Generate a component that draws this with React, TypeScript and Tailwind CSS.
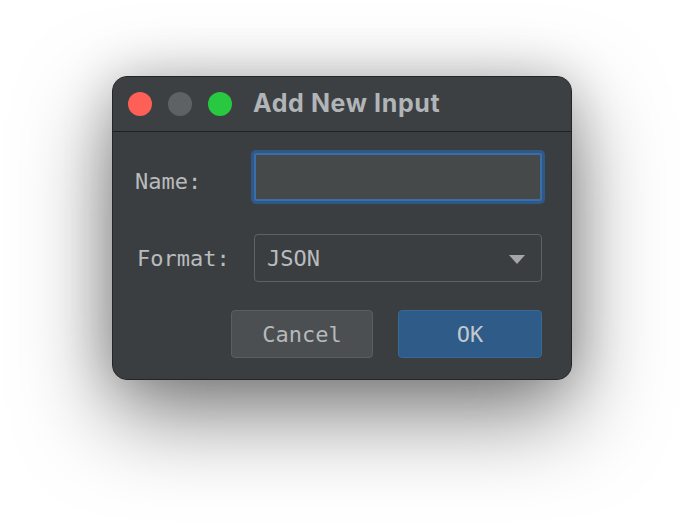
import React from "react";

export default function App() {
  return (
    <div className="w-[684px] h-[528px] bg-white overflow-hidden pl-[112px] pt-[76px]">
      <div className="w-[460px] h-[304px] rounded-[15px] bg-[#3c3f41] border border-[#242526] shadow-[0_34px_90px_rgba(0,0,0,0.5),0_0_50px_rgba(0,0,0,0.18)] flex flex-col overflow-hidden">
        <div className="h-[55px] flex items-center pl-[15px] border-b border-[#1f2021] bg-[#3d4043]">
          <div className="flex items-center gap-[16px]">
            <span className="w-[24px] h-[24px] rounded-full bg-[#fe5f57]" />
            <span className="w-[24px] h-[24px] rounded-full bg-[#5f6264]" />
            <span className="w-[24px] h-[24px] rounded-full bg-[#28c840]" />
          </div>
          <span
            className="ml-[21px] text-[25px] font-bold text-[#b2b5b8] tracking-[0.6px]"
            style={{ fontFamily: "Inter, 'Noto Sans', sans-serif" }}
          >
            Add New Input
          </span>
        </div>
        <div
          className="flex-1 bg-[#3b3e40] pl-[22px] pr-[29px] pt-[21px] flex flex-col text-[#b9bcbf]"
          style={{ fontFamily: "'DejaVu Sans Mono', monospace" }}
        >
          <div className="flex items-center h-[48px]">
            <span className="w-[119px] text-[22px] leading-none pt-[10px]">Name:</span>
            <div className="flex-1 h-[48px] bg-[#45494a] border-2 border-[#3b6ea5] rounded-[2px] ring-[3px] ring-[#2d5887]" />
          </div>
          <div className="flex items-center h-[48px] mt-[33px]">
            <span className="w-[119px] pl-[2px] text-[22px] leading-none pt-[1px]">Format:</span>
            <div className="flex-1 h-[48px] border-[1.5px] border-[#5f6264] rounded-[4px] flex items-center pl-[12px] pr-[16px]">
              <span className="text-[22px] leading-none flex-1 pt-[2px]">JSON</span>
              <svg width="16" height="9" viewBox="0 0 16 9" className="mt-[2px]">
                <path d="M0 0 L16 0 L8 9 Z" fill="#a4a6a8" />
              </svg>
            </div>
          </div>
          <div className="flex justify-end gap-[25px] mt-[28px]">
            <button className="w-[142px] h-[48px] rounded-[4px] bg-[#4b4f51] border border-[#5b5e60] text-[22px] text-[#b6b9bb] flex items-center justify-center">
              Cancel
            </button>
            <button className="w-[144px] h-[48px] rounded-[4px] bg-[#2e5b88] border border-[#3a6894] text-[22px] text-[#c3c8cd] flex items-center justify-center">
              OK
            </button>
          </div>
        </div>
      </div>
    </div>
  );
}
